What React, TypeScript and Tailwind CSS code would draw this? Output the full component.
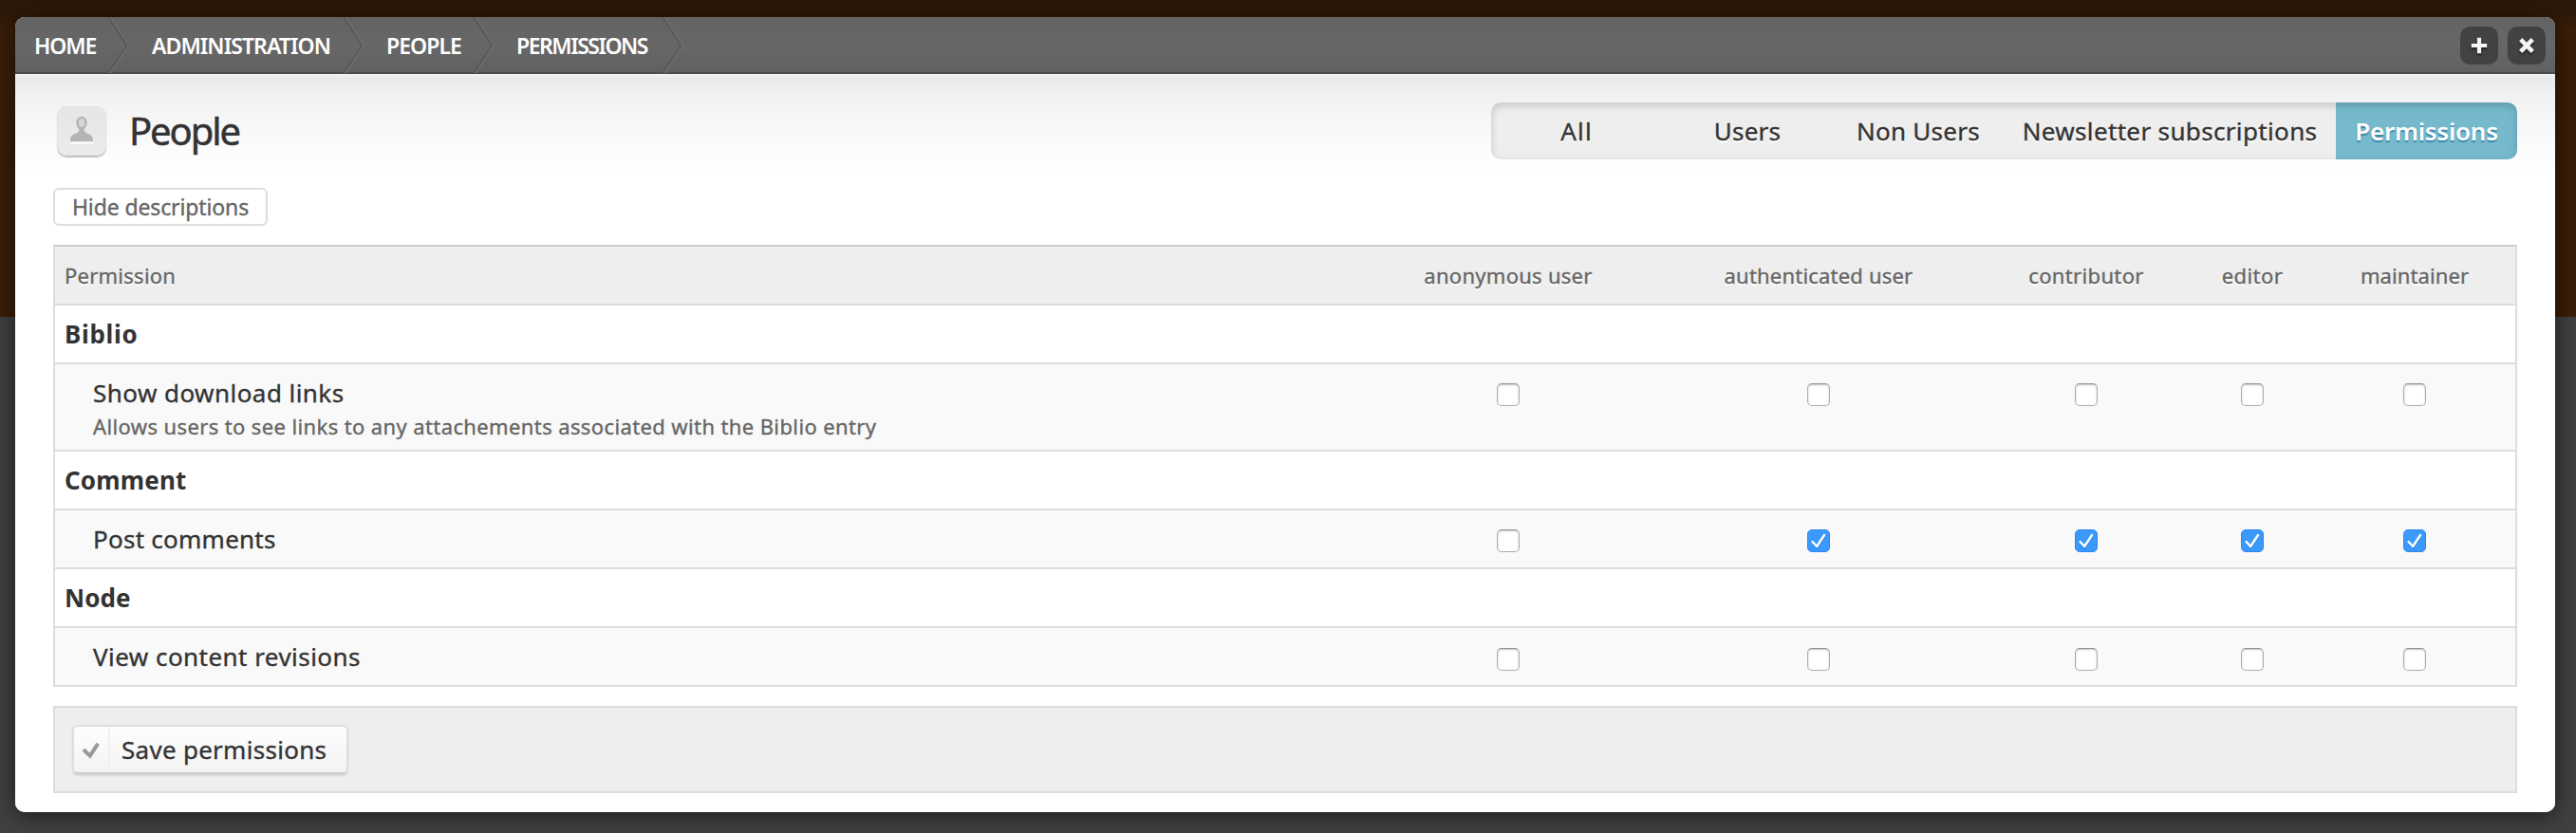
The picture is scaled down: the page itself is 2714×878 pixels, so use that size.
type Crumb = { label: string; text: string; box: string };

const crumbs: Crumb[] = [
  { label: 'HOME', text: 'tracking-[-1.15px]', box: 'w-[121px] pl-[20px]' },
  { label: 'ADMINISTRATION', text: 'tracking-[-0.95px]', box: 'w-[248px] pl-[23px]' },
  { label: 'PEOPLE', text: 'tracking-[-0.95px]', box: 'w-[137px] pl-[22px]' },
  { label: 'PERMISSIONS', text: 'tracking-[-1.5px]', box: 'w-[199px] pl-[22px]' },
];

const tabs = [
  { label: 'All', box: 'w-[180px] tracking-[1.2px]', active: false },
  { label: 'Users', box: 'w-[180px] tracking-[0.2px]', active: false },
  { label: 'Non Users', box: 'w-[180px] tracking-[0.25px]', active: false },
  { label: 'Newsletter subscriptions', box: 'w-[350px] tracking-[0.35px]', active: false },
  { label: 'Permissions', box: 'w-[191px] tracking-[-0.24px]', active: true },
];

const roles = [
  { name: 'anonymous user', spacing: 'tracking-[0.28px]' },
  { name: 'authenticated user', spacing: 'tracking-[0.2px]' },
  { name: 'contributor', spacing: 'tracking-[0.35px]' },
  { name: 'editor', spacing: 'tracking-[0.43px]' },
  { name: 'maintainer', spacing: 'tracking-[0.1px]' },
];

type Row =
  | { kind: 'module'; name: string; spacing: string }
  | { kind: 'permission'; name: string; spacing: string; description?: string; granted: boolean[]; boxTop: string };

const rows: Row[] = [
  { kind: 'module', name: 'Biblio', spacing: 'tracking-[0.7px]' },
  {
    kind: 'permission',
    name: 'Show download links',
    spacing: 'tracking-[0.45px]',
    description: 'Allows users to see links to any attachements associated with the Biblio entry',
    granted: [false, false, false, false, false],
    boxTop: 'pt-5',
  },
  { kind: 'module', name: 'Comment', spacing: 'tracking-[0.16px]' },
  {
    kind: 'permission',
    name: 'Post comments',
    spacing: 'tracking-[0.25px]',
    granted: [false, true, true, true, true],
    boxTop: 'pt-5',
  },
  { kind: 'module', name: 'Node', spacing: 'tracking-[0.06px]' },
  {
    kind: 'permission',
    name: 'View content revisions',
    spacing: 'tracking-[0.46px]',
    granted: [false, false, false, false, false],
    boxTop: 'pt-[21px]',
  },
];

const columns = 'grid grid-cols-[1376px_310px_344px_220px_130px_212px]';

function Chevron() {
  return (
    <svg className="ml-auto h-[60px] w-[24px] shrink-0" viewBox="0 0 24 60" fill="none">
      <path d="M1 0 L20.5 30 L1 59" stroke="#595959" strokeWidth="1.8" />
      <path d="M3.5 0 L22.5 30 L3.5 59" stroke="#6e6e6e" strokeWidth="1.4" />
    </svg>
  );
}

function Checkbox({ checked }: { checked: boolean }) {
  if (checked) {
    return (
      <span className="flex size-6 items-center justify-center rounded-[5px] border border-[#2f86f2] bg-[#3b99fc]">
        <svg className="size-[22px]" viewBox="0 0 22 22" fill="none">
          <path d="M5 13.8 L9.3 18.6 L17 6.6" stroke="#2478d8" strokeWidth="2.2" opacity="0.6" />
          <path d="M4.6 12 L9.1 17 L17 5" stroke="#fff" strokeWidth="2.4" strokeLinecap="round" strokeLinejoin="round" />
        </svg>
      </span>
    );
  }
  return (
    <span className="block size-6 rounded-[5px] border border-[#adadad] border-t-[#929292] bg-white shadow-[inset_0_1px_2px_rgba(0,0,0,0.24)]" />
  );
}

export default function App() {
  return (
    <div className="h-[878px] w-[2714px] overflow-hidden bg-[linear-gradient(180deg,#2b1809_0px,#2d1909_12px,#3a1e08_34px,#3a1e08_334px,#404040_334px,#404040_878px)] pt-[18px] pr-[22px] pl-4 font-['Noto_Sans',sans-serif] text-[#333] [-webkit-text-stroke:0.35px]">
      <div className="h-[838px] w-[2676px] rounded-[10px] bg-white shadow-[0_3px_22px_rgba(0,0,0,0.6)]">
        <header className="flex h-[60px] items-center rounded-t-[10px] bg-linear-to-b from-[#636363] via-[#676767] to-[#606060] shadow-[inset_0_-2px_1px_rgba(0,0,0,0.22)]">
          <nav className="flex h-[60px] items-center">
            {crumbs.map((c) => (
              <div key={c.label} className={`flex h-[60px] items-center ${c.box}`}>
                <span className={`text-[23px] font-semibold text-white [-webkit-text-stroke:0px] ${c.text}`}>{c.label}</span>
                <Chevron />
              </div>
            ))}
          </nav>
          <div className="mr-[10px] ml-auto flex gap-[10px]">
            <button className="flex size-10 items-center justify-center rounded-[10px] bg-[#424242]">
              <svg className="size-6 drop-shadow-[0_2px_1px_rgba(0,0,0,0.5)]" viewBox="0 0 24 24">
                <path d="M12 3.8 V20.2 M3.8 12 H20.2" stroke="#f4f4f4" strokeWidth="4.2" />
              </svg>
            </button>
            <button className="flex size-10 items-center justify-center rounded-[10px] bg-[#424242]">
              <svg className="size-6 drop-shadow-[0_2px_1px_rgba(0,0,0,0.5)]" viewBox="0 0 24 24">
                <path d="M5.7 5.7 L18.3 18.3 M18.3 5.7 L5.7 18.3" stroke="#f4f4f4" strokeWidth="4.6" />
              </svg>
            </button>
          </div>
        </header>

        <div className="h-[778px] rounded-b-[10px] bg-[linear-gradient(180deg,#f4f4f4_0px,#e9e9e9_4px,#ebebeb_9px,#f0f0f0_20px,#f5f5f5_40px,#fafafa_70px,#fff_102px)] px-10 pt-[30px]">
          <div className="flex h-[60px] items-center">
            <span className="ml-1 flex h-[52px] w-[52px] justify-center rounded-[10px] border border-[#e2e2e2] bg-linear-to-b from-[#e6e6e6] to-[#ebebeb] pt-[9px] shadow-[0_2px_1px_rgba(0,0,0,0.24)]">
              <svg className="h-[30px] w-[28px]" viewBox="0 0 28 30">
                <path d="M2 28.8 H26" stroke="#fafafa" strokeWidth="2" />
                <path
                  d="M14 1 C10.5 1 8.3 3.6 8.3 7.2 C8.3 9.8 9.5 12.4 11.3 13.9 C11.6 16.6 9.5 18 6 19.6 C3 21 2 22.5 2 27 H26 C26 22.5 25 21 22 19.6 C18.5 18 16.4 16.6 16.7 13.9 C18.5 12.4 19.7 9.8 19.7 7.2 C19.7 3.6 17.5 1 14 1 Z"
                  fill="#b4b4b4"
                />
                <ellipse cx="14" cy="7.5" rx="3.2" ry="4.6" fill="#d6d6d6" />
              </svg>
            </span>
            <h1 className="ml-[24px] text-[40px] leading-[60px] tracking-[-2.1px] [-webkit-text-stroke:0.5px]">People</h1>
            <div className="relative ml-auto flex h-[60px] overflow-hidden rounded-[10px] bg-[#eee] text-[26px]">
              {tabs.map((t) => (
                <div
                  key={t.label}
                  className={`flex h-[60px] items-center justify-center ${t.box} ${
                    t.active
                      ? 'bg-[#76b9cc] font-semibold text-white [-webkit-text-stroke:0px] [text-shadow:0_2px_1px_#3a86a8]'
                      : '[text-shadow:0_2px_0_#fff]'
                  }`}
                >
                  {t.label}
                </div>
              ))}
              <span className="pointer-events-none absolute inset-0 rounded-[10px] shadow-[inset_0_3px_8px_rgba(0,0,0,0.18)]" />
            </div>
          </div>

          <button className="mt-[30px] flex h-10 w-[226px] items-center justify-center rounded-[6px] border-2 border-[#ddd] bg-white text-[23px] tracking-[-0.12px] text-[#666]">
            Hide descriptions
          </button>

          <div className="mt-5 w-[2596px] border-2 border-[#ddd] border-t-[#ccc]">
            <div className={`${columns} h-[60px] items-center bg-[#eee] text-[22px] text-[#666] [text-shadow:0_2px_0_#fff]`}>
              <div className="pl-[10px] tracking-[0.25px]">Permission</div>
              {roles.map((r) => (
                <div key={r.name} className={`text-center ${r.spacing}`}>
                  {r.name}
                </div>
              ))}
            </div>
            {rows.map((r) =>
              r.kind === 'module' ? (
                <div
                  key={r.name}
                  className={`flex h-[62px] items-center border-t-2 border-[#ddd] bg-white pl-[10px] text-[26px] font-bold [-webkit-text-stroke:0px] ${r.spacing}`}
                >
                  {r.name}
                </div>
              ) : (
                <div key={r.name} className={`${columns} border-t-2 border-[#ddd] bg-[#f9f9f9]`}>
                  <div className={`pt-3 pl-[40px] ${r.description ? 'pb-2' : 'pb-3'}`}>
                    <div className={`text-[26px] leading-[36px] ${r.spacing}`}>{r.name}</div>
                    {r.description && (
                      <div className="text-[22px] leading-[34px] tracking-[0.385px] text-[#666]">{r.description}</div>
                    )}
                  </div>
                  {r.granted.map((g, i) => (
                    <div key={i} className={`flex items-start justify-center ${r.boxTop}`}>
                      <Checkbox checked={g} />
                    </div>
                  ))}
                </div>
              ),
            )}
          </div>

          <div className="mt-5 flex h-[92px] w-[2596px] items-center border-2 border-[#ddd] bg-[#eee] pl-[18px]">
            <button className="flex h-[52px] w-[291px] items-center rounded-[6px] border-2 border-[#ddd] border-b-[#ccc] bg-linear-to-b from-[#fefefe] to-[#f3f3f3] text-[26px] tracking-[0.28px] shadow-[0_2px_2px_rgba(0,0,0,0.1)]">
              <span className="flex h-[48px] w-[38px] items-center justify-center border-r-2 border-[#f0f0f0]">
                <svg className="mt-px h-[18px] w-[20px]" viewBox="0 0 20 18" fill="none">
                  <path d="M2 8 L8.8 14.6 L17.2 1.8" stroke="#999" strokeWidth="4" />
                </svg>
              </span>
              <span className="pl-[12px]">Save permissions</span>
            </button>
          </div>
        </div>
      </div>
    </div>
  );
}
